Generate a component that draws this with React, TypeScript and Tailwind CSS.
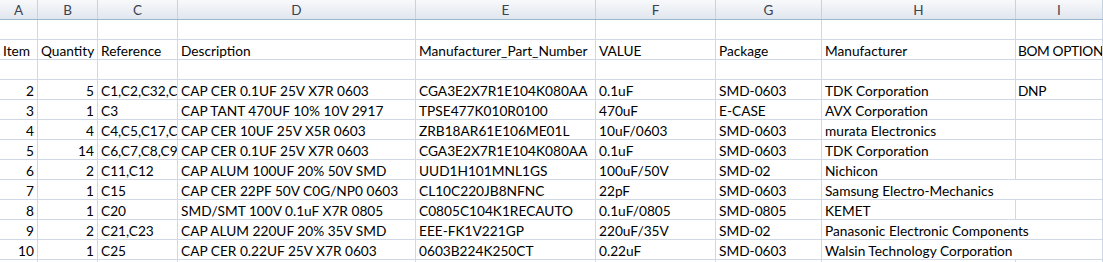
import React from "react";

const widthCls = [
  "w-[38px]",
  "w-[60px]",
  "w-[80px]",
  "w-[238px]",
  "w-[180px]",
  "w-[120px]",
  "w-[106px]",
  "w-[194px]",
  "w-[87px]",
];
const letters = ["A", "B", "C", "D", "E", "F", "G", "H", "I"];

type Row = string[];
const empty: Row = ["", "", "", "", "", "", "", "", ""];
const rows: Row[] = [
  empty,
  ["Item", "Quantity", "Reference", "Description", "Manufacturer_Part_Number", "VALUE", "Package", "Manufacturer", "BOM OPTION"],
  empty,
  ["2", "5", "C1,C2,C32,C33", "CAP CER 0.1UF 25V X7R 0603", "CGA3E2X7R1E104K080AA", "0.1uF", "SMD-0603", "TDK Corporation", "DNP"],
  ["3", "1", "C3", "CAP TANT 470UF 10% 10V 2917", "TPSE477K010R0100", "470uF", "E-CASE", "AVX Corporation", ""],
  ["4", "4", "C4,C5,C17,C29", "CAP CER 10UF 25V X5R 0603", "ZRB18AR61E106ME01L", "10uF/0603", "SMD-0603", "murata Electronics", ""],
  ["5", "14", "C6,C7,C8,C9,C10", "CAP CER 0.1UF 25V X7R 0603", "CGA3E2X7R1E104K080AA", "0.1uF", "SMD-0603", "TDK Corporation", ""],
  ["6", "2", "C11,C12", "CAP ALUM 100UF 20% 50V SMD", "UUD1H101MNL1GS", "100uF/50V", "SMD-02", "Nichicon", ""],
  ["7", "1", "C15", "CAP CER 22PF 50V C0G/NP0 0603", "CL10C220JB8NFNC", "22pF", "SMD-0603", "Samsung Electro-Mechanics", ""],
  ["8", "1", "C20", "SMD/SMT 100V 0.1uF X7R 0805", "C0805C104K1RECAUTO", "0.1uF/0805", "SMD-0805", "KEMET", ""],
  ["9", "2", "C21,C23", "CAP ALUM 220UF 20% 35V SMD", "EEE-FK1V221GP", "220uF/35V", "SMD-02", "Panasonic Electronic Components", ""],
  ["10", "1", "C25", "CAP CER 0.22UF 25V X7R 0603", "0603B224K250CT", "0.22uF", "SMD-0603", "Walsin Technology Corporation", ""],
  empty,
];

const cellBase =
  "h-[20px] shrink-0 border-r border-b border-[#d0d7e5] overflow-hidden whitespace-nowrap leading-[22px] px-[3px]";

function DataRow({ row }: { row: Row }) {
  const cells: React.ReactNode[] = [];
  let i = 0;
  while (i < row.length) {
    const val = row[i];
    // Excel overflow: a long text in H runs into the empty cell I
    if (i === 7 && row[8] === "" && val.length > 24) {
      cells.push(
        <div key={i} className={`${cellBase} w-[281px] text-left`}>
          {val}
        </div>
      );
      break;
    }
    const right = (i === 0 || i === 1) && /^\d+$/.test(val);
    const tight = i === 8 ? "tracking-[-0.35px] pl-[2px]" : "";
    cells.push(
      <div key={i} className={`${cellBase} ${widthCls[i]} ${right ? "text-right" : "text-left"} ${tight}`}>
        {val}
      </div>
    );
    i++;
  }
  return <div className="flex">{cells}</div>;
}

export default function App() {
  return (
    <div className="w-[1103px] h-[262px] overflow-hidden bg-white text-black text-[13.7px] font-['Lato','Open_Sans',sans-serif]">
      <div className="flex h-[20px] border-b border-[#9eb6ce] bg-gradient-to-b from-[#f8f9fb] to-[#e1e6ee]">
        {letters.map((l, idx) => (
          <div
            key={l}
            className={`${widthCls[idx]} shrink-0 border-r border-[#c5d2e0] text-center text-[13.5px] leading-[20px] text-[#3b4250]`}
          >
            {l}
          </div>
        ))}
      </div>
      {rows.map((r, k) => (
        <DataRow key={k} row={r} />
      ))}
    </div>
  );
}
